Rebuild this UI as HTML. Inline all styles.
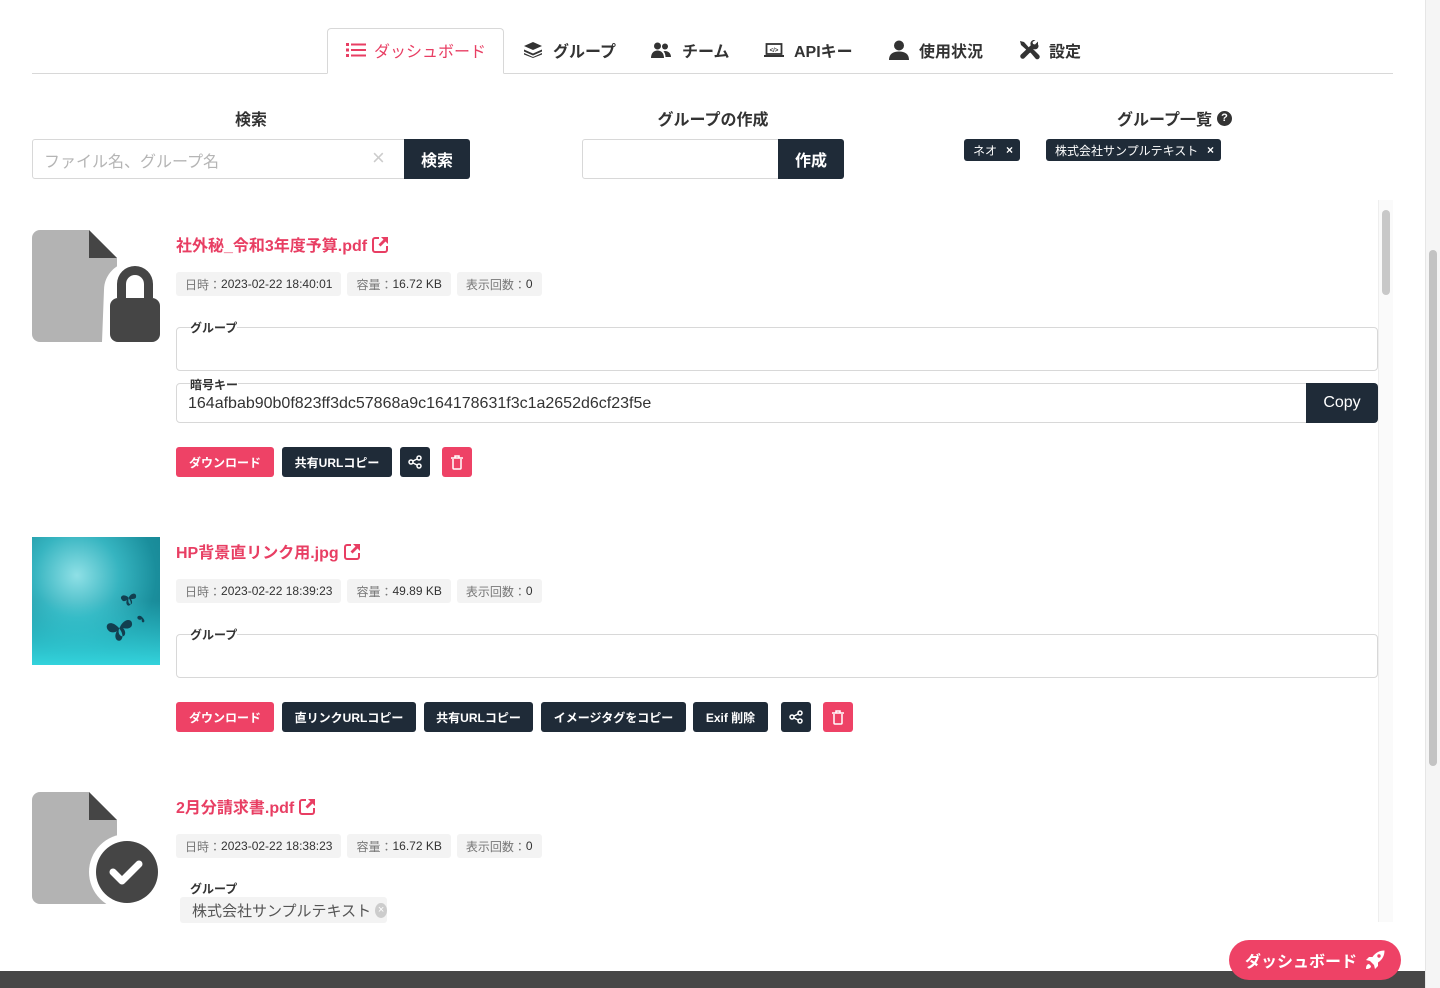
<!DOCTYPE html>
<html><head><meta charset="utf-8">
<style>
*{box-sizing:border-box;margin:0;padding:0}
body{width:1440px;height:988px;overflow:hidden;background:#fff;font-family:"Liberation Sans","Noto Sans CJK JP",sans-serif;color:#333;position:relative;white-space:nowrap}
.a{position:absolute}
.tab{position:absolute;top:27px;height:46px;display:flex;align-items:center;gap:8px;font-size:16px;font-weight:bold;color:#333}
.tab svg{display:block}
.lbl{position:absolute;font-size:16px;font-weight:bold;color:#333;text-align:center}
.btnd{background:#1f2b38;color:#fff;font-weight:bold;border-radius:3px;display:flex;align-items:center;justify-content:center;position:absolute}
.chip{position:absolute;height:22px;background:#1f2b38;color:#fff;font-size:12px;border-radius:3px;display:flex;align-items:center;justify-content:space-between;padding:0 7px 0 9px}
.title{position:absolute;left:176px;font-size:16px;font-weight:bold;color:#e83e63;display:flex;align-items:center;gap:5px}
.meta{position:absolute;left:176px;display:flex;gap:6px}
.meta span{background:#f3f3f3;border-radius:3px;font-size:12px;height:24px;display:flex;align-items:center;padding:0 9px;color:#333}
.meta span i{font-style:normal;color:#777}
.fs{position:absolute;left:176px;width:1202px;border:1px solid #d8d8d8;border-radius:4px}
.leg{position:absolute;left:190px;font-size:12px;font-weight:bold;color:#333;background:#fff}
.bt{position:absolute;height:30px;border-radius:3px;font-size:12px;font-weight:bold;color:#fff;display:flex;align-items:center;justify-content:center}
.pk{background:#ee4266}.dk{background:#1f2b38}
</style></head><body>

<div class="a" style="left:32px;top:73px;width:1361px;height:1px;background:#d8d8d8"></div>
<div class="a" style="left:327px;top:28px;width:177px;height:46px;border:1px solid #d8d8d8;border-bottom:1px solid #fff;border-radius:4px 4px 0 0;background:#fff"></div>
<div class="tab" style="left:346px;color:#e83e63;font-weight:normal">
<svg width="20" height="16" viewBox="0 0 20 16"><g fill="#e83e63"><rect x="0" y="1" width="3" height="3"/><rect x="0" y="6.5" width="3" height="3"/><rect x="0" y="12" width="3" height="3"/><rect x="5" y="1.5" width="15" height="2"/><rect x="5" y="7" width="15" height="2"/><rect x="5" y="12.5" width="15" height="2"/></g></svg>ダッシュボード</div>
<div class="tab" style="left:524px;gap:11px">
<svg width="18" height="16" viewBox="0 0 18 16"><g fill="#333"><path d="M9 0L18 4 9 8 0 4z"/><path d="M0 7.5l9 4 9-4v2l-9 4-9-4z"/><path d="M0 11l9 4 9-4v1.5l-9 3.5-9-3.5z"/></g></svg>グループ</div>
<div class="tab" style="left:651px;gap:11px">
<svg width="20" height="16" viewBox="0 0 20 16"><g fill="#333"><circle cx="6.5" cy="4" r="3.5"/><circle cx="14" cy="4.5" r="3"/><path d="M0 16c0-5 3-7.5 6.5-7.5S13 11 13 16z"/><path d="M14 9c3 0 6 2 6 6h-5.5c0-2.5-.8-4.5-2-5.6.5-.3 1-.4 1.5-.4z"/></g></svg>チーム</div>
<div class="tab" style="left:764px;gap:10px">
<svg width="20" height="16" viewBox="0 0 20 16"><g fill="none" stroke="#333" stroke-width="1.8"><rect x="2.5" y="2" width="15" height="10"/></g><rect x="0" y="13" width="20" height="2" fill="#333"/><text x="10" y="10" font-size="6" text-anchor="middle" fill="#333">&lt;/&gt;</text></svg>APIキー</div>
<div class="tab" style="left:889px;gap:10px">
<svg width="20" height="20" viewBox="0 0 20 20"><g fill="#333"><circle cx="10" cy="5.5" r="5"/><path d="M0 20c0-6 4-8.5 10-8.5S20 14 20 20z"/></g></svg>使用状況</div>
<div class="tab" style="left:1018px;gap:9px">
<svg width="22" height="20" viewBox="0 0 22 20"><g fill="#333"><path d="M2 1l4 1 8 9-2 2-9-8z"/><path d="M12 12l3-3 6 6c1 1 1 2.5 0 3.5s-2.5 1-3.5 0z"/><path d="M20 1.5l-3 3-2-.5-.5-2 3-2c-2-.5-4.5.5-5 3-.2 1 0 1.6.3 2.2L3 14.5c-1 1-1 2.5 0 3.5s2.5 1 3.5 0l9-9c.6.3 1.3.5 2.2.3 2.5-.5 3.5-3 2.3-4.8z"/></g></svg>設定</div>

<div class="lbl" style="left:32px;width:438px;top:106px">検索</div>
<div class="a" style="left:32px;top:139px;width:374px;height:40px;border:1px solid #d8d8d8;border-radius:3px 0 0 3px;font-size:16px;color:#b5b5b5;padding:8px 11px">ファイル名、グループ名</div>
<div class="a" style="left:372px;top:146px;font-size:22px;color:#ccc;line-height:24px">×</div>
<div class="btnd" style="left:404px;top:139px;width:66px;height:40px;font-size:16px;border-radius:0 3px 3px 0">検索</div>

<div class="lbl" style="left:582px;width:262px;top:106px">グループの作成</div>
<div class="a" style="left:582px;top:139px;width:198px;height:40px;border:1px solid #d8d8d8;border-radius:3px 0 0 3px"></div>
<div class="btnd" style="left:778px;top:139px;width:66px;height:40px;font-size:16px;border-radius:0 3px 3px 0">作成</div>

<div class="lbl" style="left:1117px;top:106px;display:flex;align-items:center;gap:5px">グループ一覧<span style="width:15px;height:15px;border-radius:50%;background:#333;color:#fff;font-size:11px;display:flex;align-items:center;justify-content:center">?</span></div>
<div class="chip" style="left:964px;top:139px;width:56px"><span>ネオ</span><b>×</b></div>
<div class="chip" style="left:1046px;top:139px;width:175px"><span>株式会社サンプルテキスト</span><b>×</b></div>

<div class="a" style="left:1378px;top:200px;width:15px;height:722px;background:#fafafa;border-left:1px solid #eee"></div>
<div class="a" style="left:1382px;top:210px;width:8px;height:85px;background:#c8c8c8;border-radius:4px"></div>

<!-- item 1 -->
<svg class="a" style="left:32px;top:230px" width="128" height="112" viewBox="0 0 128 112">
<path d="M8 0h49l28 28v84H8a8 8 0 0 1-8-8V8a8 8 0 0 1 8-8z" fill="#b3b3b3"/><path d="M57 0l28 28H57z" fill="#454545"/>
<path d="M72 60a28 28 0 0 1 56 0v52H70z" fill="#fff"/>
<path d="M85 68v-14a18 18 0 0 1 36 0v14h-9v-14a9 9 0 0 0-18 0v14z" fill="#454545"/>
<rect x="78" y="68" width="50" height="44" rx="8" fill="#454545"/></svg>
<div class="title" style="top:232px">社外秘_令和3年度予算.pdf<svg width="17" height="17" viewBox="0 0 17 17"><path d="M7 2H3a2 2 0 0 0-2 2v10a2 2 0 0 0 2 2h10a2 2 0 0 0 2-2v-4" fill="none" stroke="#e83e63" stroke-width="2"/><path d="M9 1h7v7l-2.5-2.5-5 5-2-2 5-5z" fill="#e83e63"/></svg></div>
<div class="meta" style="top:272px"><span><i>日時：</i>2023-02-22 18:40:01</span><span><i>容量：</i>16.72 KB</span><span><i>表示回数：</i>0</span></div>
<div class="fs" style="top:327px;height:44px"></div>
<div class="leg" style="top:319px">グループ</div>
<div class="fs" style="top:383px;height:40px;width:1132px;border-radius:4px 0 0 4px"></div>
<div class="leg" style="top:376px">暗号キー</div>
<div class="a" style="left:188px;top:395px;font-size:16px;color:#333">164afbab90b0f823ff3dc57868a9c164178631f3c1a2652d6cf23f5e</div>
<div class="btnd" style="left:1306px;top:383px;width:72px;height:40px;font-size:16px;font-weight:normal;border-radius:0 4px 4px 0">Copy</div>
<div class="bt pk" style="left:176px;top:447px;width:98px">ダウンロード</div>
<div class="bt dk" style="left:282px;top:447px;width:110px">共有URLコピー</div>
<div class="bt dk" style="left:400px;top:447px;width:30px"><svg width="14" height="14" viewBox="0 0 14 14"><g fill="none" stroke="#fff" stroke-width="1.5"><circle cx="3" cy="7" r="2"/><circle cx="11" cy="3" r="2"/><circle cx="11" cy="11" r="2"/><path d="M5 6l4-2M5 8l4 2"/></g></svg></div>
<div class="bt pk" style="left:442px;top:447px;width:30px"><svg width="12" height="15" viewBox="0 0 12 15"><g fill="none" stroke="#fff" stroke-width="1.5"><path d="M2 4v9a1 1 0 0 0 1 1h6a1 1 0 0 0 1-1V4"/><path d="M0 3h12M4 3V1h4v2"/></g></svg></div>

<!-- item 2 -->
<div class="a" style="left:32px;top:537px;width:128px;height:128px;background:radial-gradient(circle at 35% 30%,#8fe0e6 0%,#36b4c0 35%,#1a8e9c 65%,#157f8e 100%);overflow:hidden">
<div class="a" style="left:0;top:64px;width:128px;height:64px;background:linear-gradient(180deg,rgba(40,200,210,0) 0%,#33d3dc 100%)"></div>
<svg class="a" style="left:72px;top:52px" width="55" height="75" viewBox="0 0 55 75"><g fill="#123f50"><path d="M14 38c-8-8-14-2-10 3 2 3 7 3 9 1-4 6 0 12 4 9 3-3 1-9-3-13zM16 38c4-9 13-9 12-2-1 4-6 4-9 3 4 4 2 10-2 8-3-2-3-6-1-9z"/><path d="M24 8c-5-4-9 0-6 3 1 2 4 1 5 0-2 4 1 7 3 5 2-2 0-5-2-8zM25 8c3-5 8-4 7 0 0 2-3 2-5 2 2 3 1 6-1 5-2-1-2-4-1-7z"/><path d="M38 28c-3-3-6 0-4 2 1 1 3 1 4 0-1 3 1 4 2 3 1-1 0-3-2-5z"/></g></svg>
</div>
<div class="title" style="top:539px">HP背景直リンク用.jpg<svg width="17" height="17" viewBox="0 0 17 17"><path d="M7 2H3a2 2 0 0 0-2 2v10a2 2 0 0 0 2 2h10a2 2 0 0 0 2-2v-4" fill="none" stroke="#e83e63" stroke-width="2"/><path d="M9 1h7v7l-2.5-2.5-5 5-2-2 5-5z" fill="#e83e63"/></svg></div>
<div class="meta" style="top:579px"><span><i>日時：</i>2023-02-22 18:39:23</span><span><i>容量：</i>49.89 KB</span><span><i>表示回数：</i>0</span></div>
<div class="fs" style="top:634px;height:44px"></div>
<div class="leg" style="top:626px">グループ</div>
<div class="bt pk" style="left:176px;top:702px;width:98px">ダウンロード</div>
<div class="bt dk" style="left:282px;top:702px;width:134px">直リンクURLコピー</div>
<div class="bt dk" style="left:424px;top:702px;width:109px">共有URLコピー</div>
<div class="bt dk" style="left:541px;top:702px;width:145px">イメージタグをコピー</div>
<div class="bt dk" style="left:693px;top:702px;width:75px">Exif 削除</div>
<div class="bt dk" style="left:781px;top:702px;width:30px"><svg width="14" height="14" viewBox="0 0 14 14"><g fill="none" stroke="#fff" stroke-width="1.5"><circle cx="3" cy="7" r="2"/><circle cx="11" cy="3" r="2"/><circle cx="11" cy="11" r="2"/><path d="M5 6l4-2M5 8l4 2"/></g></svg></div>
<div class="bt pk" style="left:823px;top:702px;width:30px"><svg width="12" height="15" viewBox="0 0 12 15"><g fill="none" stroke="#fff" stroke-width="1.5"><path d="M2 4v9a1 1 0 0 0 1 1h6a1 1 0 0 0 1-1V4"/><path d="M0 3h12M4 3V1h4v2"/></g></svg></div>

<!-- item 3 -->
<svg class="a" style="left:32px;top:792px" width="128" height="112" viewBox="0 0 128 112">
<path d="M8 0h49l28 28v84H8a8 8 0 0 1-8-8V8a8 8 0 0 1 8-8z" fill="#b3b3b3"/><path d="M57 0l28 28H57z" fill="#454545"/>
<circle cx="95" cy="80" r="38" fill="#fff"/><circle cx="95" cy="80" r="31" fill="#454545"/>
<path d="M81 80l9 9 17-17" fill="none" stroke="#fff" stroke-width="7" stroke-linecap="round" stroke-linejoin="round"/></svg>
<div class="title" style="top:794px">2月分請求書.pdf<svg width="17" height="17" viewBox="0 0 17 17"><path d="M7 2H3a2 2 0 0 0-2 2v10a2 2 0 0 0 2 2h10a2 2 0 0 0 2-2v-4" fill="none" stroke="#e83e63" stroke-width="2"/><path d="M9 1h7v7l-2.5-2.5-5 5-2-2 5-5z" fill="#e83e63"/></svg></div>
<div class="meta" style="top:834px"><span><i>日時：</i>2023-02-22 18:38:23</span><span><i>容量：</i>16.72 KB</span><span><i>表示回数：</i>0</span></div>
<div class="a" style="left:190px;top:880px;font-size:12px;font-weight:bold">グループ</div>
<div class="a" style="left:180px;top:897px;height:26px;width:207px;background:#f3f3f3;border-radius:3px;font-size:15px;color:#555;display:flex;align-items:center;padding-left:12px;gap:4px">株式会社サンプルテキスト<span style="width:15px;height:15px;border-radius:50%;background:#ccc;color:#fff;font-size:11px;display:flex;align-items:center;justify-content:center">×</span></div>

<div class="a" style="left:0;top:971px;width:1425px;height:17px;background:#474747"></div>
<div class="a" style="left:1229px;top:940px;width:172px;height:40px;background:#ee4266;border-radius:20px;color:#fff;font-size:16px;font-weight:bold;display:flex;align-items:center;justify-content:center;gap:8px">ダッシュボード<svg width="20" height="20" viewBox="0 0 20 20"><g fill="#fff"><path d="M19.5.5c-5 0-9 2-12 6.5L4 7 1 10l4 1 4 4 1 4 3-3v-3.5C17.5 9.5 19.5 5.5 19.5.5z"/><circle cx="14" cy="6" r="1.7" fill="#ee4266"/><path d="M4 14c-2 0-3 2-3 5 3 0 5-1 5-3z"/></g></svg></div>

<div class="a" style="left:1425px;top:0;width:15px;height:988px;background:#f5f5f5;border-left:1px solid #e6e6e6"></div>
<div class="a" style="left:1429px;top:250px;width:8px;height:516px;background:#c3c3c3;border-radius:4px"></div>
</body></html>
